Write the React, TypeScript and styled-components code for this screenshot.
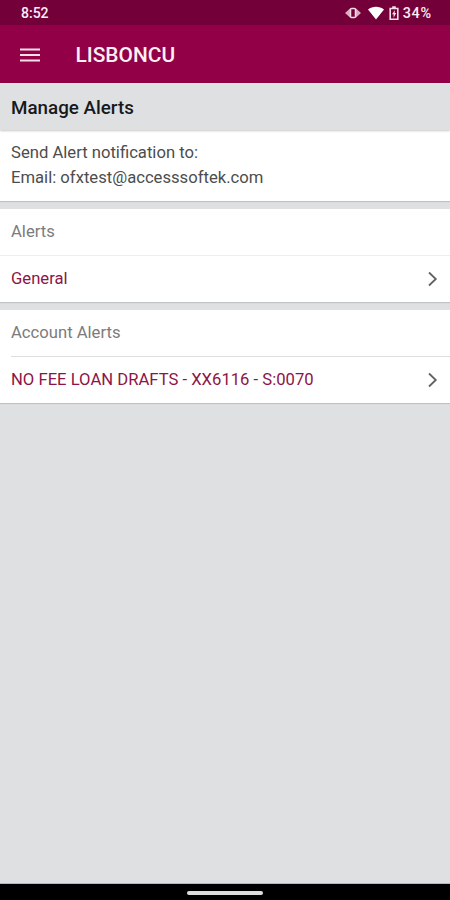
import React from 'react';
import styled, { createGlobalStyle } from 'styled-components';

const GlobalStyle = createGlobalStyle`
  * { box-sizing: border-box; }
  body { margin: 0; background: #dee0e2; font-family: Roboto, sans-serif; }
`;

const Screen = styled.div`
  width: 450px;
  height: 900px;
  display: flex;
  flex-direction: column;
  background: #dee0e2;
  overflow: hidden;
`;

const StatusBar = styled.div`
  height: 25px;
  flex: none;
  display: flex;
  align-items: center;
  padding: 1px 19px 0 21px;
  background: #730038;
  color: #fbeef4;
  font-size: 14px;
  line-height: 16px;
  font-weight: 500;
`;

const StatusIcons = styled.div`
  display: flex;
  align-items: center;
  margin-left: auto;
`;

const BatteryLevel = styled.span`
  padding-top: 2px;
  font-size: 14.4px;
  letter-spacing: 0.6px;
  margin-right: -0.6px;
`;

const StatusIcon = styled.svg<{ $gap: number }>`
  display: block;
  margin-right: ${(p) => p.$gap}px;
`;

const AppBar = styled.header`
  height: 58px;
  flex: none;
  display: flex;
  align-items: center;
  padding: 0 20px;
  background: #920047;
  color: #fdf0f5;
`;

const MenuIcon = styled.svg`
  display: block;
  margin: 1px 35.5px 0 0;
`;

const AppTitle = styled.h1`
  margin: 2px 0 0;
  font-size: 20.9px;
  line-height: 24px;
  font-weight: 500;
`;

const PageHeading = styled.h2`
  height: 47px;
  flex: none;
  margin: 0;
  padding-left: 11px;
  font-size: 18.8px;
  line-height: 48px;
  font-weight: 500;
  color: #17191b;
  background: #dee0e2;
  border-top: 1px solid #e8e4e6;
  box-shadow: 0 1px 2px rgba(0, 0, 0, 0.22);
  z-index: 1;
`;

const Card = styled.section<{ $height: number }>`
  height: ${(p) => p.$height}px;
  flex: none;
  margin-bottom: 8px;
  background: #fff;
  box-shadow: 0 1px 1px rgba(70, 80, 85, 0.2);
`;

const Recipient = styled.div`
  padding: 10px 11px 0;
  font-size: 16.65px;
  line-height: 25px;
  color: #4d4d4d;
`;

const CardTitle = styled.div<{ $inset?: boolean }>`
  height: 47px;
  margin-left: ${(p) => (p.$inset ? 11 : 0)}px;
  padding-left: ${(p) => (p.$inset ? 0 : 11)}px;
  border-bottom: 1px solid ${(p) => (p.$inset ? '#dedede' : '#eeeeee')};
  font-size: 16.65px;
  line-height: 46px;
  color: #7c7c7c;
`;

const LinkRow = styled.div`
  height: 45px;
  display: flex;
  align-items: center;
  justify-content: space-between;
  padding: 0 12px 0 11px;
  font-size: 16.65px;
  color: #8c1546;
`;

const NavBar = styled.div`
  height: 16px;
  flex: none;
  margin-top: auto;
  display: flex;
  justify-content: center;
  padding-top: 7px;
  background: #000;
  box-shadow: 0 -1px 0 #b4b6b7;
`;

const HomeHandle = styled.div`
  width: 76px;
  height: 4px;
  border-radius: 2px;
  background: #dedede;
`;

const Chevron = () => (
  <svg width="10" height="16" viewBox="0 0 10 16" fill="none" stroke="#626262" strokeWidth="1.8">
    <path d="M1 1.5 7.8 8 1 14.5" />
  </svg>
);

export default function App() {
  return (
    <>
      <GlobalStyle />
      <Screen>
        <StatusBar>
          <span>8:52</span>
          <StatusIcons>
            <StatusIcon $gap={7} width="16" height="12" viewBox="0 0 16 12">
              <path d="M0 6 5 1.5v9zM16 6l-5-4.5v9z" fill="#dcabc1" />
              <rect x="5.5" y="1.5" width="5" height="9" rx="1" fill="#730038" stroke="#f3d9e4" strokeWidth="1.5" />
            </StatusIcon>
            <StatusIcon $gap={5} width="16" height="14" viewBox="0 0 16 14">
              <path d="M0 3.5C4.5-.2 11.5-.2 16 3.5L8 13.5z" fill="#fff" />
            </StatusIcon>
            <StatusIcon $gap={4} width="10" height="14" viewBox="0 0 10 14">
              <path d="M1.2 2.5h7.6v10.7H1.2zM3.2 1h3.6" fill="none" stroke="#f6dfe9" strokeWidth="1.6" />
              <path d="M6 4 3 8.2h1.6v3.6L7.2 7H5.6z" fill="#f6dfe9" />
            </StatusIcon>
            <BatteryLevel>34%</BatteryLevel>
          </StatusIcons>
        </StatusBar>
        <AppBar>
          <MenuIcon width="20" height="16" viewBox="0 0 20 16">
            <path d="M0 2.5h20M0 8h20M0 13.5h20" stroke="#f6dfe9" strokeWidth="2" />
          </MenuIcon>
          <AppTitle>LISBONCU</AppTitle>
        </AppBar>
        <PageHeading>Manage Alerts</PageHeading>
        <Card $height={71}>
          <Recipient>
            <div>Send Alert notification to:</div>
            <div>Email: ofxtest@accesssoftek.com</div>
          </Recipient>
        </Card>
        <Card $height={93}>
          <CardTitle>Alerts</CardTitle>
          <LinkRow>
            General
            <Chevron />
          </LinkRow>
        </Card>
        <Card $height={93}>
          <CardTitle $inset>Account Alerts</CardTitle>
          <LinkRow>
            NO FEE LOAN DRAFTS - XX6116 - S:0070
            <Chevron />
          </LinkRow>
        </Card>
        <NavBar>
          <HomeHandle />
        </NavBar>
      </Screen>
    </>
  );
}
